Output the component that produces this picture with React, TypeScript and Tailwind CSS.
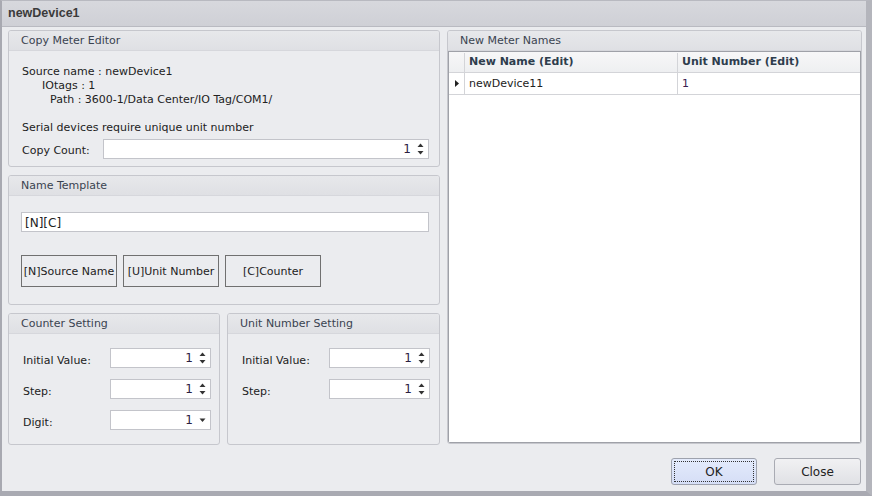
import React from 'react'

const FONT = { fontFamily: '"DejaVu Sans", Tahoma, sans-serif' }

function Group({ title, className, children }: { title: string; className?: string; children?: React.ReactNode }) {
  return (
    <div className={`flex flex-col rounded-[3px] border border-[#c6c7cd] bg-[#ebecef] overflow-hidden ${className ?? ''}`}>
      <div className="h-[20px] shrink-0 flex items-center pl-[12px] pt-[2px] bg-gradient-to-b from-[#e7e8eb] to-[#dfe0e4] border-b border-[#d6d7dc] text-[11px] text-[#3a4350]">
        {title}
      </div>
      {children}
    </div>
  )
}

function Spin({ value, drop, className }: { value: string; drop?: boolean; className?: string }) {
  return (
    <div className={`h-[20px] flex items-center justify-end bg-white border border-[#c3c4ca] pr-[4px] ${className ?? ''}`}>
      <span className="text-[12px] text-[#2a2040] mr-[6px]">{value}</span>
      {drop ? (
        <svg width="7" height="12" viewBox="0 0 7 12">
          <path d="M0.5 4.5h6l-3 3.5z" fill="#333" />
        </svg>
      ) : (
        <svg width="7" height="14" viewBox="0 0 7 14">
          <path d="M3.5 1.5l3 3.5h-6z" fill="#333" />
          <path d="M0.5 9h6l-3 3.5z" fill="#333" />
        </svg>
      )}
    </div>
  )
}

function Field({ label, value, drop, labelW }: { label: string; value: string; drop?: boolean; labelW: string }) {
  return (
    <div className="flex items-center h-[20px]">
      <span className={`${labelW} text-[11px] leading-[14px] text-[#222] pt-[5px]`}>{label}</span>
      <Spin value={value} drop={drop} className="w-[101px]" />
    </div>
  )
}

export default function App() {
  return (
    <div style={FONT} className="w-[872px] h-[496px] flex flex-col bg-[#ebecef] border-l-2 border-l-[#a8a9b1] border-r-[6px] border-r-[#b4b5bc] border-b-[5px] border-b-[#a9aab2] border-t border-t-[#b8b9c0] text-[#222]">
      <div
        style={{ fontFamily: '"Liberation Sans", Arial, sans-serif' }}
        className="h-[26px] shrink-0 flex items-center pl-[6px] bg-gradient-to-b from-[#d7d8dd] to-[#cfd0d6] border-b border-[#b9bac1] text-[12.5px] font-bold text-[#3b3b3b]"
      >
        newDevice1
      </div>
      <div className="flex-1 flex flex-col pl-[6px] pr-[4px] pt-[3px]">
        <div className="flex gap-[7px]">
          <div className="w-[432px] flex flex-col gap-[8px]">
            <Group title="Copy Meter Editor" className="h-[137px]">
              <div className="flex flex-col pl-[13px] pt-[14px] text-[11px] leading-[14px]">
                <span>Source name : newDevice1</span>
                <span className="pl-[20px]">IOtags : 1</span>
                <span className="pl-[28px]">Path : 3600-1/Data Center/IO Tag/COM1/</span>
                <span className="pt-[14px]">Serial devices require unique unit number</span>
                <div className="flex items-center pt-[4px]">
                  <span className="w-[81px] pt-[4px]">Copy Count:</span>
                  <Spin value="1" className="w-[326px]" />
                </div>
              </div>
            </Group>
            <Group title="Name Template" className="h-[130px]">
              <div className="flex flex-col pl-[12px] pr-[10px] pt-[16px]">
                <div className="h-[20px] bg-white border border-[#c3c4ca] flex items-center pl-[3px] pt-[1px] text-[12px]">[N][C]</div>
                <div className="flex gap-[6px] pt-[23px]">
                  <button className="w-[96px] h-[32px] border border-[#707070] pt-[2px] text-[11px] text-[#222]">[N]Source Name</button>
                  <button className="w-[96px] h-[32px] border border-[#707070] pt-[2px] text-[11px] text-[#222]">[U]Unit Number</button>
                  <button className="w-[96px] h-[32px] border border-[#707070] pt-[2px] text-[11px] text-[#222]">[C]Counter</button>
                </div>
              </div>
            </Group>
            <div className="flex gap-[7px]">
              <Group title="Counter Setting" className="w-[212px] h-[132px]">
                <div className="flex flex-col gap-[11px] pl-[14px] pt-[14px]">
                  <Field label="Initial Value:" value="1" labelW="w-[87px]" />
                  <Field label="Step:" value="1" labelW="w-[87px]" />
                  <Field label="Digit:" value="1" drop labelW="w-[87px]" />
                </div>
              </Group>
              <Group title="Unit Number Setting" className="w-[213px] h-[132px]">
                <div className="flex flex-col gap-[11px] pl-[14px] pt-[14px]">
                  <Field label="Initial Value:" value="1" labelW="w-[87px]" />
                  <Field label="Step:" value="1" labelW="w-[87px]" />
                </div>
              </Group>
            </div>
          </div>
          <Group title="New Meter Names" className="w-[415px] h-[414px]">
            <div className="flex-1 bg-white border border-[#9fa1a8] flex flex-col">
              <div className="h-[21px] flex border-b border-[#d3d4d8] bg-gradient-to-b from-[#f7f7f8] to-[#eeeff1] pt-[1px] text-[11px] font-bold text-[#2e3d4d]">
                <div className="w-[16px] border-r border-[#d3d4d8]" />
                <div className="w-[213px] border-r border-[#d3d4d8] flex items-center pl-[4px]">New Name (Edit)</div>
                <div className="flex-1 flex items-center pl-[4px]">Unit Number (Edit)</div>
              </div>
              <div className="h-[22px] flex border-b border-[#d3d4d8] text-[11px] text-[#222]">
                <div className="w-[16px] border-r border-[#d3d4d8] flex items-center justify-center">
                  <svg width="4" height="7" viewBox="0 0 4 7">
                    <path d="M0 0l4 3.5L0 7z" fill="#222" />
                  </svg>
                </div>
                <div className="w-[213px] border-r border-[#d3d4d8] flex items-center pl-[4px] pt-[2px]">newDevice11</div>
                <div className="flex-1 flex items-center pl-[4px] pt-[2px] text-[#3a2050]">1</div>
              </div>
            </div>
          </Group>
        </div>
        <div className="flex justify-end gap-[17px] pt-[13px] pr-[1px]">
          <button className="w-[86px] h-[27px] rounded-[3px] border border-[#9ea2ad] bg-gradient-to-b from-[#e4ebfc] to-[#d5def6] p-[2px] text-[12px] text-[#222]">
            <span className="flex h-full w-full items-center justify-center border border-dotted border-[#333]">OK</span>
          </button>
          <button className="w-[87px] h-[27px] rounded-[3px] border border-[#a9abb3] bg-gradient-to-b from-[#f1f1f3] to-[#e0e1e5] text-[12px] text-[#222]">
            Close
          </button>
        </div>
      </div>
    </div>
  )
}
